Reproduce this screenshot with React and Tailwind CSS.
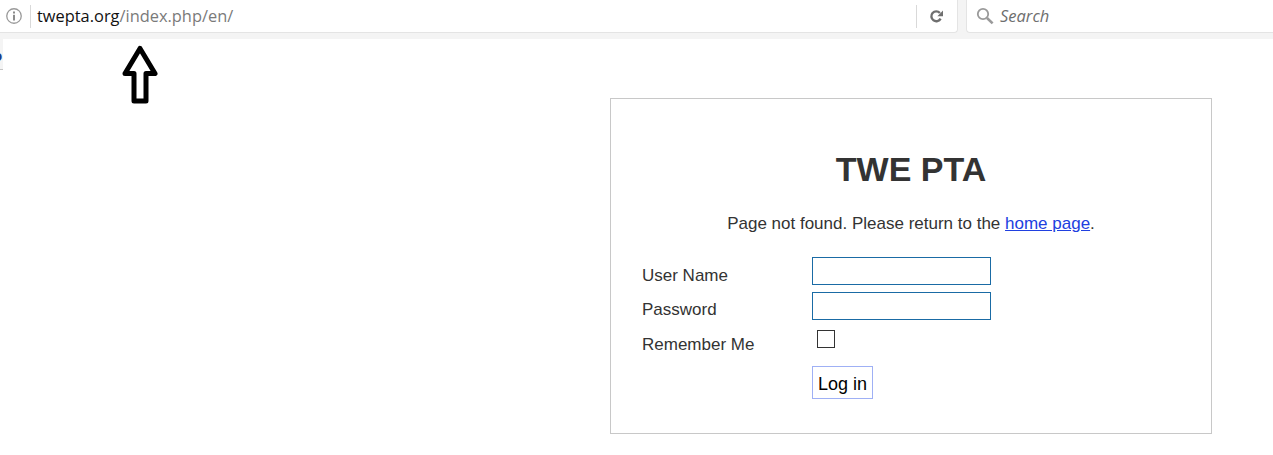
import React from 'react';

const InfoIcon = () => (
  <svg width="16" height="16" viewBox="0 0 16 16" fill="none" stroke="#9a9a9a">
    <circle cx="8" cy="8" r="7.25" strokeWidth="1.3" />
    <rect x="7" y="3.5" width="2" height="2" fill="#8c8c8c" stroke="none" />
    <rect x="7" y="6.8" width="2" height="5.7" fill="#8c8c8c" stroke="none" />
  </svg>
);

const ReloadIcon = () => (
  <svg width="15" height="15" viewBox="0 0 15 15" fill="none">
    <path d="M11.6 9.6A4.9 4.9 0 1 1 10.9 4" stroke="#6f6f6f" strokeWidth="2.4" />
    <path d="M14 1.6V7.2H8.4Z" fill="#6f6f6f" />
  </svg>
);

const SearchIcon = () => (
  <svg width="18" height="18" viewBox="0 0 18 18" fill="none" stroke="#9a9a9a">
    <circle cx="7" cy="7" r="5.2" strokeWidth="1.8" />
    <path d="M11 11l5.6 5.4" strokeWidth="2.6" />
  </svg>
);

const UpArrow = () => (
  <svg width="38" height="60" viewBox="0 0 38 60" fill="none">
    <path
      d="M19 3.5L34 28.5H25V56H13V28.5H4Z"
      stroke="#000"
      strokeWidth="5"
      strokeLinejoin="round"
    />
  </svg>
);

const Toolbar = () => (
  <div className="flex h-[39px] gap-[8px] bg-[#f4f4f4] pb-[6px]">
    <div className="flex w-[958px] items-center rounded-br-sm border-r border-b border-[#e4e4e4] bg-white">
      <div className="flex h-[23px] w-[31px] items-center justify-center border-r border-[#d9d9d9] pr-[3px]">
        <InfoIcon />
      </div>
      <div className="flex-1 pl-[6px] font-['Open_Sans',sans-serif] text-[16.4px]">
        <span className="text-[#111111]">twepta.org</span>
        <span className="text-[#7a7a7a]">/index.php/en/</span>
      </div>
      <div className="flex h-[23px] w-[41px] items-center justify-center border-l border-[#d9d9d9] pr-[2px]">
        <ReloadIcon />
      </div>
    </div>
    <div className="flex flex-1 items-center gap-[6px] rounded-bl-sm border-b border-l border-[#e4e4e4] bg-white pl-[9px]">
      <SearchIcon />
      <span className="font-['Open_Sans',sans-serif] text-[16.5px] text-[#6e6e6e] italic">Search</span>
    </div>
  </div>
);

const Field = ({ label, type, labelClass }) => (
  <div className="flex h-[35px] items-center">
    <label className={`w-[170px] ${labelClass}`}>{label}</label>
    <input
      type={type}
      className="h-[28px] w-[179px] border border-[#1a6ba5] bg-white outline-none"
    />
  </div>
);

const App = () => {
  return (
    <div className="h-[455px] w-[1273px] overflow-hidden bg-white font-['Liberation_Sans',sans-serif] text-[#333333]">
      <Toolbar />
      <div className="relative flex pt-[59px] pl-[610px]">
        <div className="absolute top-0 left-0 h-[31px] w-[3px] overflow-hidden border-b border-[#c4c4c4] bg-[#f4f4f4] pt-[7px] text-[15px] leading-[20px] font-bold text-[#1b3a8a]">
          <span className="relative left-[-7px]">o</span>
        </div>
        <div className="absolute top-[6px] left-[121px]">
          <UpArrow />
        </div>
        <div className="h-[336px] w-[602px] border border-[#c8c8c8] pt-[50px] pl-[31px] text-[17px]">
          <h1 className="mr-[31px] text-center text-[34px] leading-[40px] font-bold text-[#333333]">TWE PTA</h1>
          <p className="mt-[25px] mr-[31px] text-center leading-[20px]">
            Page not found. Please return to the{' '}
            <a href="#" className="text-[#2040e0] underline">home page</a>.
          </p>
          <form className="mt-[19px]">
            <Field label="User Name" type="text" labelClass="pt-[10px]" />
            <Field label="Password" type="password" labelClass="pt-[8px]" />
            <div className="flex h-[34px] items-center">
              <label className="w-[175px] pt-[9px]">Remember Me</label>
              <input
                type="checkbox"
                className="mb-[2px] h-[18px] w-[18px] appearance-none border border-[#333333] bg-white"
              />
            </div>
            <div className="pt-[9px] pl-[170px]">
              <button
                type="button"
                className="h-[33px] w-[61px] border border-[#9fb0f5] bg-white pt-[3px] text-[18px] text-black"
              >
                Log in
              </button>
            </div>
          </form>
        </div>
      </div>
    </div>
  );
};

export default App;
